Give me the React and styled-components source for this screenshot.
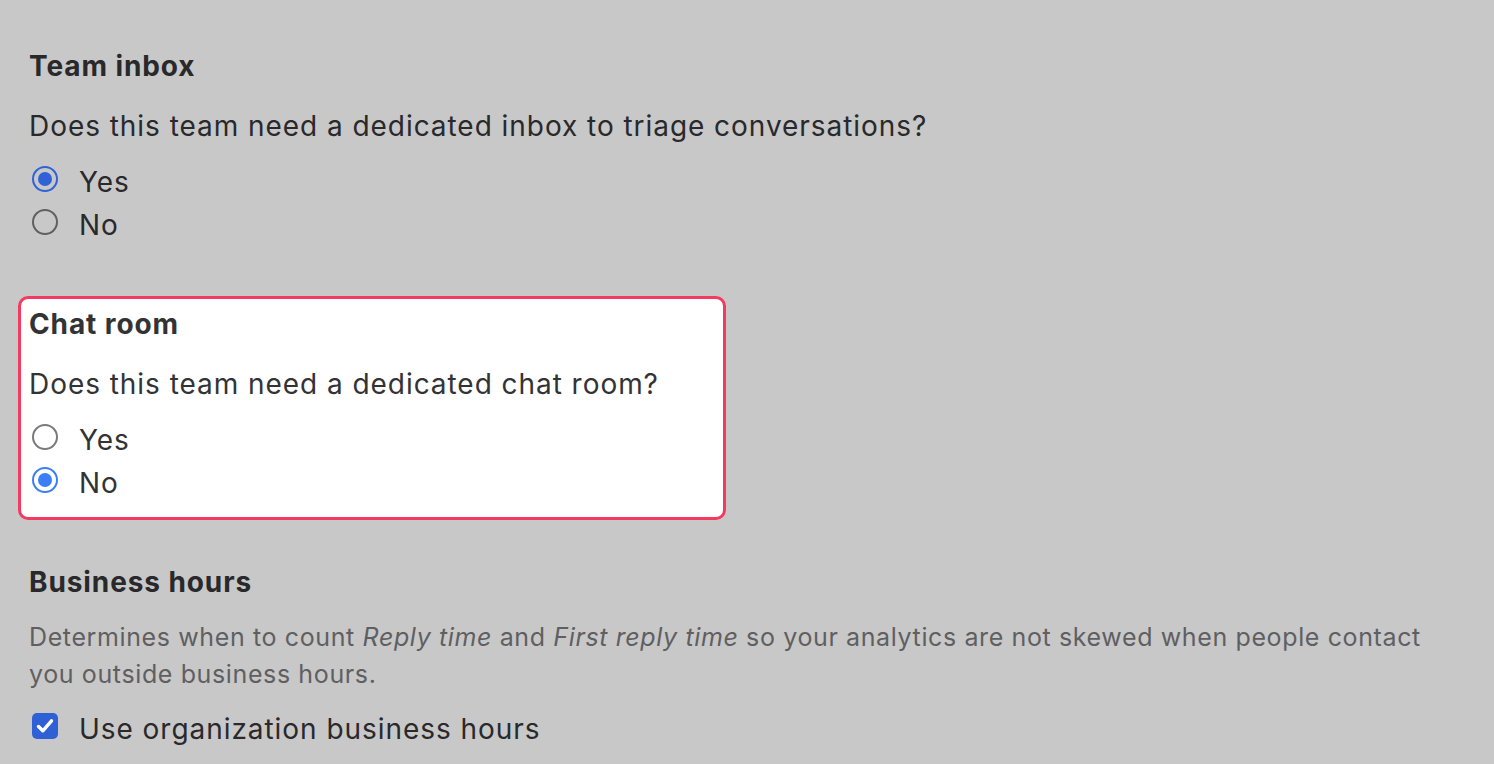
import React from "react";
import styled, { createGlobalStyle } from "styled-components";

const Global = createGlobalStyle`
  html, body { margin: 0; padding: 0; background: #c8c8c8; }
  body { font-family: Inter, "Noto Sans", "Liberation Sans", sans-serif; -webkit-font-smoothing: antialiased; }
`;

const Page = styled.div`
  box-sizing: border-box;
  width: 1494px;
  height: 764px;
  overflow: hidden;
  padding: 38px 18px 0 18px;
  display: flex;
  flex-direction: column;
  gap: 34px;
`;

const Section = styled.section`
  border: 3px solid ${(p) => (p.$highlight ? "#f53a62" : "transparent")};
  background: ${(p) => (p.$highlight ? "#ffffff" : "transparent")};
  border-radius: 10px;
  padding: 5px 8px 12px;
  width: ${(p) => (p.$highlight ? "686px" : "auto")};
  color: ${(p) => (p.$highlight ? "#333336" : "#29292c")};
`;

const Heading = styled.h2`
  margin: 0;
  font-size: 28px;
  font-weight: 700;
  line-height: 40px;
  letter-spacing: 0.9px;
`;

const Question = styled.p`
  margin: 20px 0 15px;
  font-size: 28px;
  font-weight: 400;
  line-height: 40px;
  letter-spacing: 0.95px;
`;

const Description = styled.p`
  margin: 17px 0 15px;
  font-size: 25px;
  line-height: 37px;
  letter-spacing: 0.62px;
  color: #5f5f62;
  max-width: 1420px;
  em { font-style: italic; }
`;

const OptionRow = styled.label`
  display: flex;
  align-items: center;
  height: 43px;
  font-size: 28px;
  line-height: 43px;
  letter-spacing: 0.95px;
`;

const Control = styled.span`
  width: 26px;
  height: 26px;
  margin: 0 21px 0 3px;
  transform: translateY(-4px);
  display: flex;
  align-items: center;
  justify-content: center;
  flex: none;
`;

const RadioCircle = styled.span`
  box-sizing: border-box;
  width: 26px;
  height: 26px;
  border-radius: 50%;
  border: 2px solid ${(p) => (p.$checked ? p.$accent : p.$muted)};
  background: ${(p) => p.$bg};
  display: flex;
  align-items: center;
  justify-content: center;
  &::after {
    content: "";
    display: ${(p) => (p.$checked ? "block" : "none")};
    width: 14px;
    height: 14px;
    border-radius: 50%;
    background: ${(p) => p.$accent};
  }
`;

const CheckBox = styled.span`
  width: 26px;
  height: 26px;
  border-radius: 5px;
  background: #2e60d6;
  display: flex;
  align-items: center;
  justify-content: center;
`;

function Radio({ checked, light }) {
  return (
    <Control>
      <RadioCircle
        $checked={checked}
        $accent={light ? "#3b7ff6" : "#2f62d7"}
        $muted={light ? "#7a7a7a" : "#606060"}
        $bg={light ? "#ffffff" : "#c8c8c8"}
      />
    </Control>
  );
}

function Option({ label, checked, light }) {
  return (
    <OptionRow>
      <Radio checked={checked} light={light} />
      {label}
    </OptionRow>
  );
}

export default function App() {
  return (
    <>
      <Global />
      <Page>
        <Section>
          <Heading>Team inbox</Heading>
          <Question>Does this team need a dedicated inbox to triage conversations?</Question>
          <Option label="Yes" checked />
          <Option label="No" />
        </Section>
        <Section $highlight>
          <Heading>Chat room</Heading>
          <Question>Does this team need a dedicated chat room?</Question>
          <Option label="Yes" light />
          <Option label="No" checked light />
        </Section>
        <Section>
          <Heading>Business hours</Heading>
          <Description>
            Determines when to count <em>Reply time</em> and <em>First reply time</em> so your analytics are not skewed when people contact you outside business hours.
          </Description>
          <OptionRow>
            <Control>
              <CheckBox>
                <svg width="26" height="26" viewBox="0 0 26 26" fill="none">
                  <path d="M6.5 13.5 L10.8 17.8 L19.5 7.8" stroke="#ffffff" strokeWidth="3.4" strokeLinecap="round" strokeLinejoin="round" />
                </svg>
              </CheckBox>
            </Control>
            Use organization business hours
          </OptionRow>
        </Section>
      </Page>
    </>
  );
}
